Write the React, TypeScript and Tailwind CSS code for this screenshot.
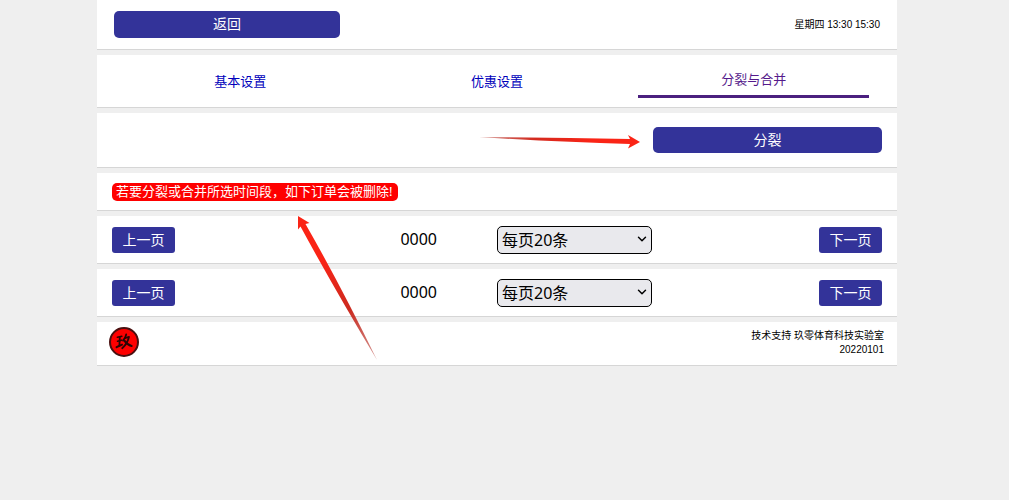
import React, { useState } from "react";
import { ChevronDown } from "lucide-react";

const tabs = [
  { label: "基本设置", href: "#basic" },
  { label: "优惠设置", href: "#discount" },
  { label: "分裂与合并", href: "#split" },
];

function Panel({ className = "", children }: { className?: string; children: React.ReactNode }) {
  return <section className={`bg-white border-b border-[#d6d6d6] px-[15px] ${className}`}>{children}</section>;
}

function PageButton({ children }: { children: React.ReactNode }) {
  return (
    <button className="block w-[63px] h-[26px] rounded-[3px] bg-[#333399] text-white text-sm leading-[26px]">
      {children}
    </button>
  );
}

function Pager() {
  const [size, setSize] = useState("20");

  return (
    <Panel className="grid grid-cols-4 items-center py-[10px]">
      <PageButton>上一页</PageButton>
      <span className="text-right pr-[60px] pb-[2px] text-base leading-6">0000</span>
      <div className="relative w-[155px] h-[27px]">
        <select
          aria-label="每页条数"
          value={size}
          onChange={(e) => setSize(e.target.value)}
          className="block w-full h-7 pl-1 appearance-none rounded-[5px] border border-black bg-[#e9e9ed] text-base leading-6"
        >
          <option value="20">每页20条</option>
          <option value="50">每页50条</option>
          <option value="100">每页100条</option>
        </select>
        <ChevronDown size={14} strokeWidth={2.5} className="absolute right-[3px] top-[6px] pointer-events-none" />
      </div>
      <div className="flex justify-end">
        <PageButton>下一页</PageButton>
      </div>
    </Panel>
  );
}

function Logo() {
  return (
    <svg viewBox="0 0 30 30" className="w-[30px] h-[30px]" aria-hidden="true">
      <circle cx="15" cy="15" r="14" fill="#fe0000" stroke="#4a1010" strokeWidth="2" />
      <g fill="none" stroke="#2a0505" strokeLinecap="round" strokeLinejoin="round">
        <path d="M8.4 10.2 L12.8 9.2" strokeWidth="1.6" />
        <path d="M8.6 14.2 L12.6 13.2" strokeWidth="1.7" />
        <path d="M10.8 10 L10.4 18.6" strokeWidth="1.8" />
        <path d="M7.6 20.2 L13 17.6" strokeWidth="2" />
        <path d="M17.2 7.4 Q16.6 11 14 13.6" strokeWidth="1.8" />
        <path d="M16.4 11 L20 9.8 Q18.6 16.6 13.2 21.2" strokeWidth="1.8" />
        <path d="M15.6 13.8 Q18.4 17.8 22.6 19" strokeWidth="2.2" />
      </g>
    </svg>
  );
}

// Red pointers drawn over the panels
function Arrows() {
  return (
    <svg width="800" height="366" viewBox="0 0 800 366" className="absolute left-0 top-0 pointer-events-none" aria-hidden="true">
      <defs>
        <linearGradient id="tailRight" gradientUnits="userSpaceOnUse" x1="382" y1="137" x2="543" y2="142">
          <stop offset="0" stopColor="#b03028" stopOpacity="0.6" />
          <stop offset="0.35" stopColor="#d42a1e" />
          <stop offset="0.7" stopColor="#fa2416" />
        </linearGradient>
        <linearGradient id="tailUp" gradientUnits="userSpaceOnUse" x1="280" y1="360" x2="201" y2="216">
          <stop offset="0" stopColor="#b03028" stopOpacity="0.5" />
          <stop offset="0.35" stopColor="#cc2b20" />
          <stop offset="0.7" stopColor="#fa2416" />
        </linearGradient>
      </defs>
      <path d="M382 137 Q460 137.800 533 139 L531 135 L543 142 L531 148.500 L533 144 Q460 142 382 137 Z" fill="url(#tailRight)" />
      <path d="M280 360 Q238 290 203.500 226.500 L201 229.500 L201 216 L212.500 223 L208.500 224 Q244 286 280 360 Z" fill="url(#tailUp)" />
    </svg>
  );
}

export default function App() {
  return (
    <div className="min-h-screen bg-[#efefef] pr-[15px] text-black font-['Noto_Sans','Noto_Sans_CJK_SC',sans-serif]">
      <main className="relative max-w-[800px] mx-auto flex flex-col gap-[5px]">
        <Panel className="flex items-center justify-between py-[11px]">
          <button className="w-[226px] h-[27px] pb-[2px] ml-[2px] rounded-[5px] bg-[#333399] text-white text-sm leading-6">返回</button>
          <span className="pr-[2px] text-[10px] leading-4 font-['Liberation_Sans','Noto_Sans_CJK_SC',sans-serif]">星期四 13:30 15:30</span>
        </Panel>

        <Panel className="pt-[10px] pb-[9px]">
          <nav className="grid grid-cols-3 text-[13px] leading-8 text-center">
            {tabs.map((tab, i) => (
              <a
                key={tab.href}
                href={tab.href}
                className={`block w-[90%] mx-auto ${i === 2 ? "h-[33px] leading-7 text-[#551a8b] border-b-3 border-[#4b207f]" : "text-[#0000bb]"}`}
              >
                {tab.label}
              </a>
            ))}
          </nav>
        </Panel>

        <Panel className="flex justify-end py-[14px]">
          <button className="w-[229px] h-[26px] rounded-[5px] bg-[#333399] text-white text-sm leading-[26px]">分裂</button>
        </Panel>

        <Panel className="flex pt-[10px] pb-[9px]">
          <p className="pl-1 pr-[5px] pb-[2px] rounded-[5px] bg-[#fe0000] text-white text-[13px] leading-4">
            若要分裂或合并所选时间段，如下订单会被删除!
          </p>
        </Panel>

        <Pager />
        <Pager />

        <Panel className="flex items-start justify-between pt-[5px] pb-2">
          <div className="-ml-[3px] h-[30px]">
            <Logo />
          </div>
          <div className="pt-[2px] -mr-[2px] text-right text-[10px] leading-[14px] font-['Liberation_Sans','Noto_Sans_CJK_SC',sans-serif]">
            <p>技术支持 玖零体育科技实验室</p>
            <p>20220101</p>
          </div>
        </Panel>

        <Arrows />
      </main>
    </div>
  );
}
